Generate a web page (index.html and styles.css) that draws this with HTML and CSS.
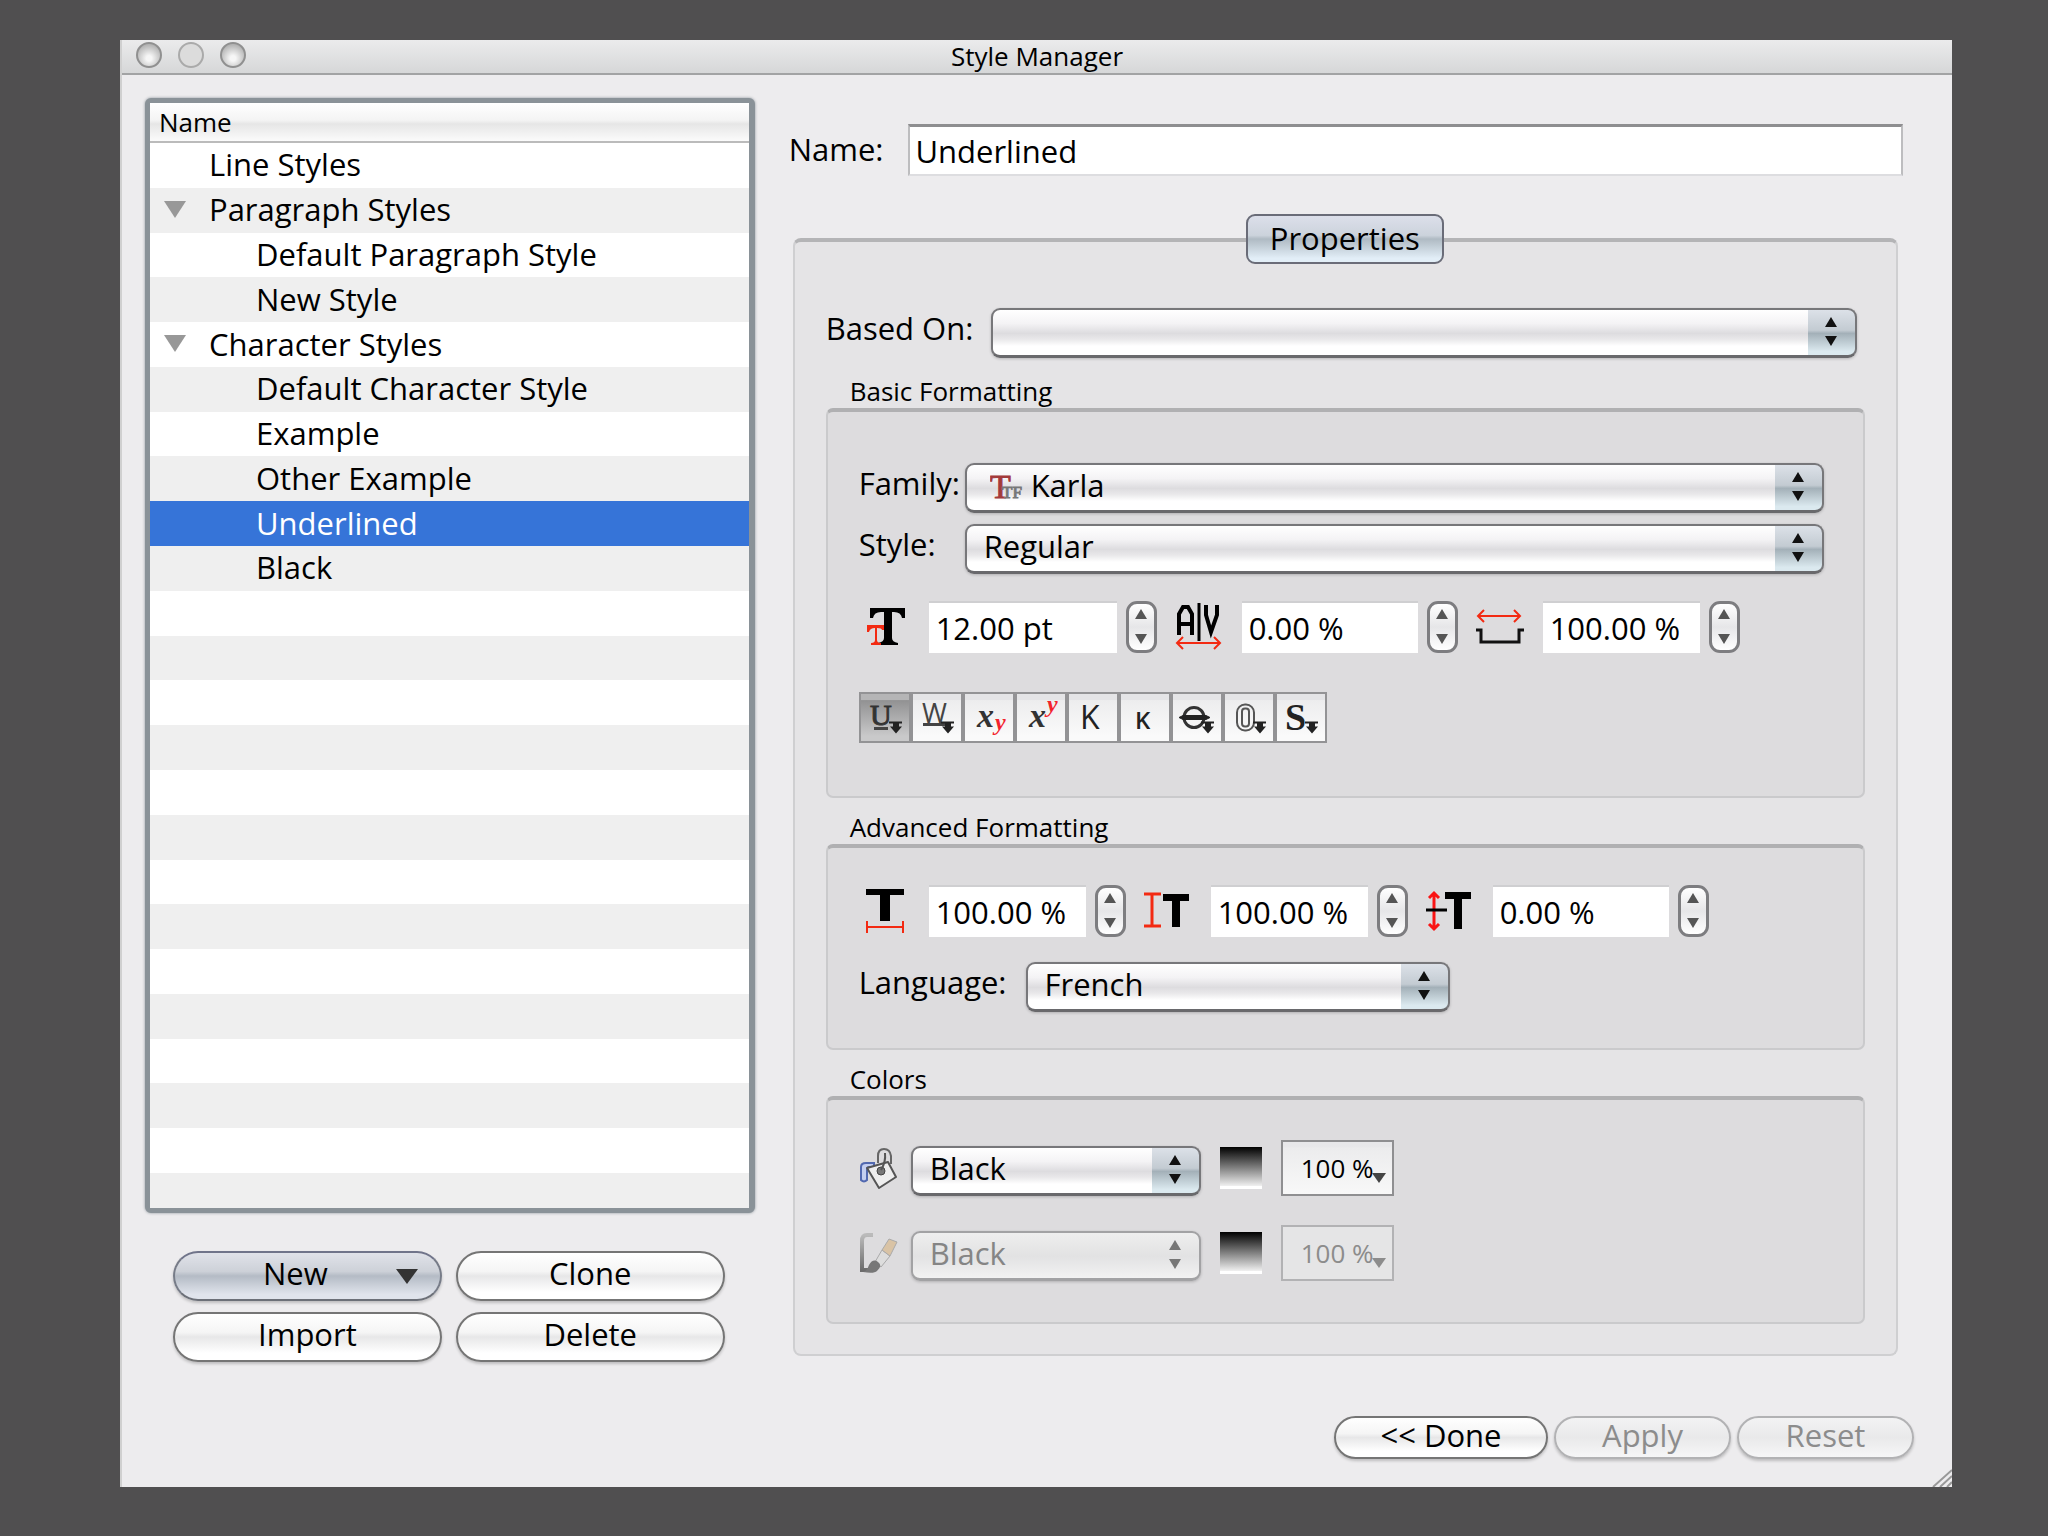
FILE: index.html
```
<!DOCTYPE html>
<html lang="en">

<head>
  <meta charset="utf-8">
  <title>Style Manager</title>
  <link rel="stylesheet" href="styles.css">
</head>

<body>
  <main class="window">
    <header class="titlebar">
      <div class="lights">
        <button class="light" aria-label="Close"></button>
        <button class="light dim" aria-label="Minimize"></button>
        <button class="light" aria-label="Zoom"></button>
      </div>
      <h1>Style Manager</h1>
    </header>

    <div class="content">
      <section class="sidebar">
        <div class="list">
          <div class="list-header">Name</div>
          <ul class="rows">
            <li>Line Styles</li>
            <li class="open">Paragraph Styles</li>
            <li class="child">Default Paragraph Style</li>
            <li class="child">New Style</li>
            <li class="open">Character Styles</li>
            <li class="child">Default Character Style</li>
            <li class="child">Example</li>
            <li class="child">Other Example</li>
            <li class="child selected">Underlined</li>
            <li class="child">Black</li>
            <li></li>
            <li></li>
            <li></li>
            <li></li>
            <li></li>
            <li></li>
            <li></li>
            <li></li>
            <li></li>
            <li></li>
            <li></li>
            <li></li>
            <li></li>
            <li></li>
          </ul>
        </div>
        <div class="actions">
          <button class="pill menu">New</button>
          <button class="pill">Clone</button>
          <button class="pill">Import</button>
          <button class="pill">Delete</button>
        </div>
      </section>

      <section class="editor">
        <div class="name-row">
          <label for="name">Name:</label>
          <input class="name" id="name" type="text" value="Underlined">
        </div>

        <div class="tabs">
          <button class="tab">Properties</button>
        </div>
        <div class="panel">
          <div class="based-row">
            <label for="based">Based On:</label>
            <span class="popup"><select id="based"><option></option></select></span>
          </div>

          <h2>Basic Formatting</h2>
          <div class="group basic">
            <div class="font-row">
              <label for="family">Family:</label>
              <span class="popup with-icon">
                <select id="family"><option>Karla</option></select>
                <svg class="tf" width="36" height="36" viewBox="0 0 36 36">
                  <text x="0" y="29" font-size="34" fill="#a33a3a" stroke="#a33a3a">T</text>
                  <text x="12" y="29" font-size="17" fill="#777" stroke="#777">TF</text>
                </svg>
              </span>
            </div>
            <div class="font-row">
              <label for="style">Style:</label>
              <span class="popup"><select id="style"><option>Regular</option></select></span>
            </div>

            <div class="metrics">
              <svg class="icon" width="52" height="52" viewBox="0 0 52 52">
                <path d="M11 7h35v10h-3q-1-6-8-6h-2v26q0 4 6 5v2H19v-2q6-1 6-5V11h-3q-7 0-8 6h-3z"/>
                <path d="M8 24h17v5h-2q0-2-5-2v12q0 3 4 3v2H12v-2q4 0 4-3V27q-5 0-6 4H8z" fill="#f32a12"/>
              </svg>
              <input class="long" type="text" value="12.00 pt" aria-label="Font size">
              <span class="stepper"><button class="up" aria-label="Increase font size"></button><button class="down" aria-label="Decrease font size"></button></span>
              <svg class="icon" width="52" height="52" viewBox="0 0 52 52">
                <path d="M7 34V13l4-7h5l4 7v21M7 23h13M34 4v10l5 17 6-17V4" fill="none" stroke="#000" stroke-width="4"/>
                <path d="M27 2v38" stroke="#000" stroke-width="3"/>
                <path d="M5 42h43M11 36l-6 6 6 6M42 36l6 6-6 6" fill="none" stroke="#f32a12" stroke-width="2"/>
              </svg>
              <input class="mid" type="text" value="0.00 %" aria-label="Tracking">
              <span class="stepper"><button class="up" aria-label="Increase tracking"></button><button class="down" aria-label="Decrease tracking"></button></span>
              <svg class="icon" width="52" height="52" viewBox="0 0 52 52">
                <path d="M5 15h42M11 9l-6 6 6 6M41 9l6 6-6 6" fill="none" stroke="#f32a12" stroke-width="2"/>
                <path d="M3 29h5v12h38V29h5" fill="none" stroke="#111" stroke-width="3"/>
              </svg>
              <input type="text" value="100.00 %" aria-label="Word spacing">
              <span class="stepper"><button class="up" aria-label="Increase word spacing"></button><button class="down" aria-label="Decrease word spacing"></button></span>
            </div>

            <div class="effects">
              <button class="on" aria-label="Underline"><svg viewBox="0 0 48 46">
                <text class="serif" x="9" y="30" font-size="30" fill="#333" stroke="#333">U</text>
                <path d="M13 34h14" stroke="#444" stroke-width="3"/>
                <path class="more" d="M28 27h13v2h-3v3h3l-6 7-6-7h3v-3h-4z"/>
              </svg></button>
              <button aria-label="Underline words"><svg viewBox="0 0 48 46">
                <text x="9" y="28" font-size="27" fill="#444">W</text>
                <path d="M10 30h24" stroke="#444" stroke-width="3"/>
                <path class="more" d="M28 27h13v2h-3v3h3l-6 7-6-7h3v-3h-4z"/>
              </svg></button>
              <button aria-label="Subscript"><svg viewBox="0 0 48 46">
                <text class="serif" x="12" y="32" font-size="34" font-weight="bold" font-style="italic" fill="#333">x</text>
                <text class="serif" x="30" y="35" font-size="24" font-weight="bold" font-style="italic" fill="#f3232c">y</text>
              </svg></button>
              <button aria-label="Superscript"><svg viewBox="0 0 48 46">
                <text class="serif" x="12" y="32" font-size="34" font-weight="bold" font-style="italic" fill="#333">x</text>
                <text class="serif" x="30" y="17" font-size="24" font-weight="bold" font-style="italic" fill="#f3232c">y</text>
              </svg></button>
              <button aria-label="All caps"><svg viewBox="0 0 48 46">
                <text x="11" y="34" font-size="32" fill="#222">K</text>
              </svg></button>
              <button aria-label="Small caps"><svg viewBox="0 0 48 46">
                <text x="14" y="34" font-size="24" font-weight="600" fill="#222">K</text>
              </svg></button>
              <button aria-label="Strike out"><svg viewBox="0 0 48 46">
                <circle cx="21" cy="23" r="10" fill="none" stroke="#333" stroke-width="3"/>
                <path d="M6 23l4-2h23l4 2-4 2H10z" fill="#222" stroke="#222"/>
                <path class="more" d="M28 27h13v2h-3v3h3l-6 7-6-7h3v-3h-4z"/>
              </svg></button>
              <button aria-label="Outline"><svg viewBox="0 0 48 46">
                <rect x="12" y="10" width="17" height="26" rx="8" fill="none" stroke="#555" stroke-width="2"/>
                <rect x="17" y="14" width="7" height="18" rx="3" fill="none" stroke="#555" stroke-width="2"/>
                <path class="more" d="M28 27h13v2h-3v3h3l-6 7-6-7h3v-3h-4z"/>
              </svg></button>
              <button aria-label="Shadow"><svg viewBox="0 0 48 46">
                <text class="serif" x="8" y="35" font-size="38" font-weight="bold" fill="#222">S</text>
                <path class="more" d="M28 27h13v2h-3v3h3l-6 7-6-7h3v-3h-4z"/>
              </svg></button>
            </div>
          </div>

          <h2>Advanced Formatting</h2>
          <div class="group advanced">
            <div class="metrics">
              <svg class="icon" width="52" height="52" viewBox="0 0 52 52">
                <path d="M7 4h38v6H31v26H21V10H7z"/>
                <path d="M8 36v12M44 36v12M8 42h36" fill="none" stroke="#f32a12" stroke-width="2"/>
              </svg>
              <input type="text" value="100.00 %" aria-label="Horizontal scaling">
              <span class="stepper"><button class="up" aria-label="Increase horizontal scaling"></button><button class="down" aria-label="Decrease horizontal scaling"></button></span>
              <svg class="icon" width="52" height="52" viewBox="0 0 52 52">
                <path d="M3 9h17M3 41h17M11 9v32" fill="none" stroke="#f32a12" stroke-width="3"/>
                <path d="M22 9h26v7h-9v26h-8V16h-9z"/>
              </svg>
              <input type="text" value="100.00 %" aria-label="Vertical scaling">
              <span class="stepper"><button class="up" aria-label="Increase vertical scaling"></button><button class="down" aria-label="Decrease vertical scaling"></button></span>
              <svg class="icon" width="52" height="52" viewBox="0 0 52 52">
                <path d="M11 8v36M6 13l5-5 5 5M6 39l5 5 5-5" fill="none" stroke="#fa1414" stroke-width="3"/>
                <path d="M3 25h21" stroke="#000" stroke-width="3"/>
                <path d="M22 7h26v7h-9v30h-8V14h-9z"/>
              </svg>
              <input class="mid" type="text" value="0.00 %" aria-label="Baseline offset">
              <span class="stepper"><button class="up" aria-label="Increase baseline offset"></button><button class="down" aria-label="Decrease baseline offset"></button></span>
            </div>
            <div class="language-row">
              <label for="language">Language:</label>
              <span class="popup"><select id="language"><option>French</option></select></span>
            </div>
          </div>

          <h2>Colors</h2>
          <div class="group colors">
            <div class="color-row">
              <svg width="40" height="42" viewBox="0 0 40 42">
                <path d="M2 33V20q0-4 5-4h8v4h-5q-2 0-2 3v10q-3 3-6 0z" fill="#c4cff0" stroke="#5269b0" stroke-width="2"/>
                <path d="M8 21l21-6 8 15-17 11z" fill="#eee" stroke="#555" stroke-width="2" stroke-linejoin="round"/>
                <path d="M19 16V9q0-7 6-7t7 7v8" fill="none" stroke="#666" stroke-width="2"/>
                <circle cx="22" cy="24" r="4" fill="#777" stroke="#444"/>
                <path d="M26 6q1 9-4 17" fill="none" stroke="#555" stroke-width="2"/>
              </svg>
              <span class="popup"><select aria-label="Fill color"><option>Black</option></select></span>
              <span class="swatch"></span>
              <button class="shade">100 %</button>
            </div>
            <div class="color-row off">
              <svg width="40" height="42" viewBox="0 0 40 42">
                <defs>
                  <linearGradient id="ink" x1="0" y1="0" x2="0" y2="1">
                    <stop offset="0" stop-color="#bbb"/>
                    <stop offset="1" stop-color="#6c6c6c"/>
                  </linearGradient>
                </defs>
                <path d="M14 3H8Q3 3 3 9v29h9" fill="none" stroke="url(#ink)" stroke-width="4"/>
                <path d="M23 18l8 6-9 11-6-5z" fill="#ddd" stroke="#aaa"/>
                <path d="M23 18l7-11 8 3-7 14z" fill="#d9c3a5" stroke="#aaa"/>
                <path d="M4 40q4-1 6-7 4-7 9-3 5 4-1 9-3 3-14 1z" fill="#777"/>
              </svg>
              <span class="popup"><select aria-label="Stroke color" disabled><option>Black</option></select></span>
              <span class="swatch"></span>
              <button class="shade" disabled>100 %</button>
            </div>
          </div>
        </div>
      </section>
    </div>

    <footer class="footer">
      <button class="pill done">&lt;&lt; Done</button>
      <button class="pill" disabled>Apply</button>
      <button class="pill" disabled>Reset</button>
    </footer>
    <svg class="grip" width="20" height="18" viewBox="0 0 20 18">
      <path d="M1 18L20 1M8 18L20 7M15 18l5-5" stroke="#999" stroke-width="2"/>
    </svg>
  </main>
</body>

</html>
```

FILE: styles.css
```
* {
  box-sizing: border-box;
}

html {
  height: 100%;
}

body {
  background: #504f50;
  color: #000;
  font: 500 31px/40px "Open Sans", "Noto Sans", sans-serif;
  height: 100%;
  margin: 0;
  padding: 40px 96px 50px 120px;
}

button,
input,
select {
  color: inherit;
  font: inherit;
  margin: 0;
  padding: 0;
}

h1,
h2 {
  font-size: 26px;
  font-weight: 500;
  margin: 0;
}

.window {
  background: #edecee;
  border-left: 2px solid #d0d0d0;
  display: flex;
  flex-direction: column;
  min-height: 100%;
  position: relative;
}

.titlebar {
  align-items: center;
  background: linear-gradient(#ebebec, #d6d7d8);
  border-bottom: 2px solid #a2a3a4;
  display: grid;
  grid-template-columns: 1fr auto 1fr;
  height: 35px;
}

.titlebar h1 {
  line-height: 30px;
  padding-bottom: 2px;
}

.lights {
  display: flex;
  gap: 16px;
  padding: 0 0 3px 14px;
}

.light {
  background: radial-gradient(circle at 50% 65%, #f6f6f6 15%, #b4b4b4 75%);
  border: 2px solid #909090;
  border-radius: 50%;
  height: 26px;
  width: 26px;
}

.light.dim {
  background: #dcdcdc;
  border-color: #aaa;
}

.content {
  display: grid;
  flex: 1;
  gap: 33px;
  grid-template-columns: 612fr 1115fr;
  padding: 22px 49px 0 22px;
}

.sidebar {
  display: flex;
  flex-direction: column;
}

/* style tree */
.list {
  background: #fff;
  border: 5px solid #8a9298;
  border-radius: 6px;
  border-right-width: 6px;
  box-shadow: 0 0 3px #8a9298;
  display: flex;
  flex-direction: column;
  height: 1115px;
  margin: 1px;
}

.list-header {
  background: linear-gradient(#fff, #f4f4f4 45%, #e6e6e6 55%, #fbfbfb);
  border-bottom: 2px solid #bbb;
  font-size: 26px;
  height: 40px;
  line-height: 38px;
  padding-left: 9px;
}

.rows {
  display: grid;
  flex: 1;
  grid-template-rows: repeat(23, 1fr) 35px;
  list-style: none;
  margin: 0;
  padding: 0;
}

.rows li {
  align-items: center;
  display: flex;
  line-height: 42px;
  padding: 0 0 2px 59px;
}

.rows li:nth-child(even) {
  background: #efefef;
}

.rows .child {
  padding-left: 106px;
}

.rows .selected {
  background: #3674d8;
  color: #fff;
}

.rows .open {
  padding-left: 14px;
}

.open::before {
  border: 11px solid transparent;
  border-bottom: 0;
  border-top: 17px solid #989898;
  content: "";
  margin-right: 23px;
}

/* buttons */
.actions {
  display: grid;
  gap: 11px 14px;
  grid-template-columns: 1fr 1fr;
  padding: 37px 31px 0 29px;
}

.pill {
  background: linear-gradient(#fff, #f5f5f5 40%, #e7e7e8 50%, #fff 85%);
  border: 2px solid #757575;
  border-radius: 25px;
  box-shadow: 0 2px 3px #0003;
  height: 50px;
  line-height: 40px;
  padding-bottom: 6px;
}

.menu {
  align-items: center;
  background: linear-gradient(#e0e2e9, #cdd1d8 40%, #b4bbc5 50%, #e0e4ec 90%);
  border-color: #70748a #777c88 #6c7078;
  display: grid;
  grid-template-columns: 1fr auto;
  padding: 0 22px 6px 20px;
}

.menu::after {
  border: 11px solid transparent;
  border-bottom: 0;
  border-top: 15px solid #333;
  content: "";
  margin-top: 7px;
}

.pill:disabled,
.shade:disabled {
  color: #8c8c8c;
}

.pill:disabled {
  background: linear-gradient(#f3f3f4, #e9e9ea 50%, #f6f6f7);
  border-color: #b2b2b4;
}

.footer {
  display: flex;
  gap: 6px;
  justify-content: flex-end;
  padding: 0 38px 28px 0;
}

.footer .pill {
  height: 43px;
  line-height: 34px;
  width: 177px;
}

.footer .done {
  width: 214px;
}

.grip {
  bottom: 0;
  position: absolute;
  right: 0;
}

/* right side */
.editor {
  padding: 27px 0 60px;
}

.name-row {
  display: flex;
  gap: 25px;
}

label {
  flex: none;
  line-height: 50px;
}

.name {
  background: #fff;
  border: 2px solid #bdbdbf;
  border-bottom-color: #dddde0;
  border-top: 3px solid #8e8e90;
  flex: 1;
  height: 52px;
  min-width: 0;
  padding-left: 5px;
}

.tabs {
  display: flex;
  justify-content: center;
  margin: 38px 6px -26px 4px;
  position: relative;
}

.tab {
  background: linear-gradient(#dcdfea, #ccd3dc 42%, #afbac3 50%, #e2eef7 92%);
  border: 2px solid #6a6c78;
  border-radius: 9px;
  height: 50px;
  line-height: 44px;
  padding: 0 22px 2px;
}

.panel {
  background: #e5e4e6;
  border: 2px solid #cfcfd1;
  border-radius: 8px;
  border-top: 4px solid #b4b4b6;
  margin: 0 5px 0 4px;
  padding: 66px 31px 30px;
}

.based-row,
.font-row,
.language-row {
  display: flex;
}

.based-row {
  gap: 18px;
  margin-bottom: 16px;
  padding-right: 8px;
}

.based-row label,
.font-row label,
.language-row label {
  line-height: 40px;
}

.popup {
  display: flex;
  flex: 1;
  position: relative;
}

.popup select {
  appearance: none;
  background:
    linear-gradient(#dce1e8, #c3cbd2 45%, #a3b0b8 52%, #dbe9ef 92%) right / 47px 100% no-repeat,
    linear-gradient(#fff, #f4f3f5 30%, #dddcdf 52%, #e9e8ea 65%, #fff 80%);
  border: 2px solid #77777a;
  border-bottom: 3px solid #69696c;
  border-radius: 9px;
  box-shadow: 0 1px 3px #0003;
  flex: 1;
  height: 50px;
  line-height: 40px;
  min-width: 0;
  opacity: 1;
  padding: 0 54px 5px 17px;
}

.popup::before,
.popup::after {
  border: 6px solid transparent;
  content: "";
  pointer-events: none;
  position: absolute;
  right: 20px;
}

.popup::before {
  border-bottom: 10px solid #111;
  border-top: 0;
  top: 9px;
}

.popup::after {
  border-bottom: 0;
  border-top: 10px solid #111;
  top: 28px;
}

.popup.with-icon select {
  padding-left: 64px;
}

.tf {
  font-family: "Liberation Serif", serif;
  left: 25px;
  position: absolute;
  top: 6px;
}

h2 {
  line-height: 34px;
  padding-left: 24px;
}

.group {
  background: #dddcde;
  border: 2px solid #cacacc;
  border-radius: 7px;
  border-top: 4px solid #b0b0b2;
  margin-bottom: 12px;
  padding: 0 31px;
}

.basic {
  height: 390px;
  padding-top: 51px;
}

.advanced {
  height: 206px;
  padding-top: 36px;
}

.colors {
  height: 228px;
  margin: 0;
  padding-top: 40px;
}

.font-row {
  margin-bottom: 11px;
  padding-right: 8px;
}

.font-row label {
  width: 106px;
}

.metrics {
  align-items: center;
  display: flex;
  gap: 9px;
  height: 54px;
  margin-top: 26px;
}

.advanced .metrics {
  margin-top: 0;
}

.metrics .icon {
  flex: none;
  margin-right: 9px;
}

.metrics .stepper + .icon {
  margin-left: 6px;
}

.serif {
  font-family: "Liberation Serif", serif;
}

.metrics input {
  background: #fff;
  border: 0;
  border-top: 2px solid #cfcfd1;
  height: 52px;
  padding-left: 7px;
  width: 157px;
}

.metrics .mid {
  width: 176px;
}

.metrics .long {
  width: 188px;
}

.stepper {
  background: linear-gradient(#fff, #e6e6e8 50%, #fff);
  border: 3px solid #7d7d80;
  border-radius: 11px;
  display: flex;
  flex: none;
  flex-direction: column;
  height: 52px;
  justify-content: space-between;
  padding: 5px 0 6px;
  width: 31px;
}

.stepper button {
  align-self: center;
  background: none;
  border: 6px solid transparent;
  height: 0;
  width: 0;
}

.stepper .up {
  border-bottom: 10px solid #555;
  border-top: 0;
}

.stepper .down {
  border-bottom: 0;
  border-top: 10px solid #555;
}

.effects {
  display: flex;
  margin-top: 38px;
}

.effects button {
  background: linear-gradient(#e4e4e6 12%, #ededee 14%, #fafafa 90%);
  border: 2px solid #939395;
  height: 51px;
  width: 52px;
}

.effects .on {
  background: linear-gradient(#b5b5b6 12%, #929293 14%, #c9c9ca 90%);
}

.effects svg {
  display: block;
  height: 47px;
  width: 48px;
}

.more {
  fill: #222;
}

.language-row {
  gap: 19px;
  margin-top: 24px;
}

.language-row .popup {
  flex: 0 1 424px;
}

.color-row {
  align-items: center;
  display: flex;
  height: 56px;
  margin-bottom: 29px;
}

.color-row .popup {
  flex: 0 0 290px;
  margin: 6px 19px 0 12px;
}

.color-row .popup select {
  padding-right: 50px;
}

.swatch {
  background: linear-gradient(#000, #eee 92%, #fff 94%);
  height: 42px;
  margin-right: 19px;
  width: 42px;
}

.shade {
  background: linear-gradient(#e8e8ea 8%, #ececed 12%, #f8f8f8);
  border: 2px solid #8f8f91;
  font-size: 26px;
  height: 56px;
  position: relative;
  width: 113px;
}

.shade::after {
  border: 7px solid transparent;
  border-bottom: 0;
  border-top: 10px solid #444;
  bottom: 11px;
  content: "";
  position: absolute;
  right: 6px;
}

.shade:disabled {
  background: #e5e5e6;
  border-color: #b2b2b4;
}

.shade:disabled::after {
  border-top-color: #8c8c8c;
}

.off .popup select {
  background: linear-gradient(#eee, #e2e2e3 52%, #f2f2f2);
  border-color: #a2a2a4;
  color: #858585;
}

.off .popup::before {
  border-bottom-color: #777;
}

.off .popup::after {
  border-top-color: #777;
}
```
